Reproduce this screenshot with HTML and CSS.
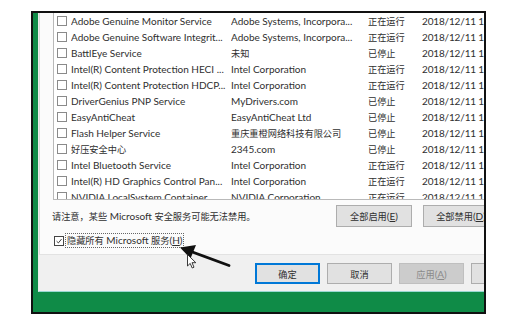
FILE: index.html
```html
<!DOCTYPE html>
<html lang="zh-CN">
<head>
<meta charset="utf-8">
<title>系统配置 - 服务</title>
<link rel="stylesheet" href="styles.css">
</head>
<body>
<div class="frame">
  <div class="window">
    <div class="tabpage">
      <div class="list">
        <div class="row"><span class="cb"></span><span class="c name">Adobe Genuine Monitor Service</span><span class="c">Adobe Systems, Incorpora...</span><span class="c zh">正在运行</span><span class="c date">2018/12/11 13:49</span></div>
        <div class="row"><span class="cb"></span><span class="c name">Adobe Genuine Software Integrit...</span><span class="c">Adobe Systems, Incorpora...</span><span class="c zh">正在运行</span><span class="c date">2018/12/11 13:49</span></div>
        <div class="row"><span class="cb"></span><span class="c name">BattlEye Service</span><span class="c zh">未知</span><span class="c zh">已停止</span><span class="c date">2018/12/11 13:49</span></div>
        <div class="row"><span class="cb"></span><span class="c name">Intel(R) Content Protection HECI ...</span><span class="c">Intel Corporation</span><span class="c zh">正在运行</span><span class="c date">2018/12/11 13:49</span></div>
        <div class="row"><span class="cb"></span><span class="c name">Intel(R) Content Protection HDCP...</span><span class="c">Intel Corporation</span><span class="c zh">正在运行</span><span class="c date">2018/12/11 13:49</span></div>
        <div class="row"><span class="cb"></span><span class="c name">DriverGenius PNP Service</span><span class="c">MyDrivers.com</span><span class="c zh">已停止</span><span class="c date">2018/12/11 13:49</span></div>
        <div class="row"><span class="cb"></span><span class="c name">EasyAntiCheat</span><span class="c">EasyAntiCheat Ltd</span><span class="c zh">已停止</span><span class="c date">2018/12/11 13:49</span></div>
        <div class="row"><span class="cb"></span><span class="c name">Flash Helper Service</span><span class="c zh">重庆重橙网络科技有限公司</span><span class="c zh">已停止</span><span class="c date">2018/12/11 13:49</span></div>
        <div class="row"><span class="cb"></span><span class="c name zh">好压安全中心</span><span class="c">2345.com</span><span class="c zh">已停止</span><span class="c date">2018/12/11 13:49</span></div>
        <div class="row"><span class="cb"></span><span class="c name">Intel Bluetooth Service</span><span class="c">Intel Corporation</span><span class="c zh">正在运行</span><span class="c date">2018/12/11 13:49</span></div>
        <div class="row"><span class="cb"></span><span class="c name">Intel(R) HD Graphics Control Pan...</span><span class="c">Intel Corporation</span><span class="c zh">正在运行</span><span class="c date">2018/12/11 13:49</span></div>
        <div class="row"><span class="cb"></span><span class="c name">NVIDIA LocalSystem Container</span><span class="c">NVIDIA Corporation</span><span class="c zh">正在运行</span><span class="c date">2018/12/11 13:49</span></div>
      </div>
      <div class="noterow">
        <span class="note"><span class="zh">请注意，某些</span> Microsoft <span class="zh">安全服务可能无法禁用。</span></span>
        <span class="btn wide"><span class="zh">全部启用</span>(<u>E</u>)</span>
        <span class="btn wide"><span class="zh">全部禁用</span>(<u>D</u>)</span>
      </div>
      <div class="hiderow">
        <span class="cb checked"><svg viewBox="0 0 10 10" width="10" height="10"><path d="M2 5.2 L4.2 7.4 L8.2 2.6" fill="none" stroke="#222" stroke-width="1.1"/></svg></span>
        <span class="focus"><span class="zh">隐藏所有</span> Microsoft <span class="zh">服务</span>(<u>H</u>)</span>
      </div>
    </div>
    <div class="footer">
      <span class="btn default"><span class="zh">确定</span></span>
      <span class="btn"><span class="zh">取消</span></span>
      <span class="btn disabled"><span class="zh">应用</span>(<u>A</u>)</span>
      <span class="btn"><span class="zh">帮助</span></span>
    </div>
  </div>
</div>
<svg class="overlay" width="517" height="336" viewBox="0 0 517 336">
  <line x1="229" y1="265.5" x2="191" y2="251.5" stroke="#111" stroke-width="2.8" stroke-linecap="round"/>
  <polygon points="180,247.5 196,245 190.5,258.5" fill="#111"/>
  <path d="M187.5 254.5 L187.5 266 L190.2 263.4 L192.2 268 L194 267.2 L192 262.7 L195.8 262.7 Z" fill="#fff" stroke="#222" stroke-width="0.9" stroke-linejoin="round"/>
</svg>
</body>
</html>
```

FILE: styles.css
```css
html, body {
  margin: 0;
  padding: 0;
}
body {
  width: 517px;
  height: 336px;
  overflow: hidden;
  background: #ffffff;
  position: relative;
  font-family: Lato, "Noto Sans CJK SC", sans-serif;
  font-size: 10px;
  color: #2f2f2f;
}
.zh {
  font-family: "Noto Sans CJK SC", sans-serif;
  font-size: 9.2px;
}
.frame {
  margin: 11px 0 0 31px;
  width: 455px;
  height: 303px;
  box-sizing: border-box;
  border: 2px solid #111;
  background: #0f8b47;
  overflow: hidden;
  padding-left: 5px;
}
.window {
  width: 560px;
  height: 279px;
  box-sizing: border-box;
  border-left: 1px solid #e8ecea;
  border-bottom: 1px solid #9ad8d2;
  background: #f0f0f0;
  display: flex;
  flex-direction: column;
}
.tabpage {
  height: 242px;
  box-sizing: border-box;
  background: #fbfbfb;
  border-left: 1px solid #dcdcdc;
  border-bottom: 1px solid #e2e2e2;
  padding-left: 13px;
}
.list {
  width: 520px;
  height: 187px;
  box-sizing: border-box;
  background: #ffffff;
  border-left: 1px solid #b9b9b9;
  border-bottom: 1px solid #b9b9b9;
  overflow: hidden;
}
.row {
  display: grid;
  grid-template-columns: 17px 160px 137px 54px 120px;
  align-items: center;
  height: 16px;
  white-space: nowrap;
}
.c {
  overflow: hidden;
  white-space: nowrap;
}
.date {
  letter-spacing: -0.15px;
}
.cb {
  display: block;
  width: 10px;
  height: 10px;
  box-sizing: border-box;
  border: 1px solid #8a8a8a;
  background: #fff;
  margin-left: 3px;
}
.noterow {
  display: flex;
  align-items: center;
  height: 22px;
  margin-top: 5px;
}
.note {
  width: 284px;
  margin-left: -1px;
  white-space: nowrap;
}
.btn {
  display: flex;
  align-items: center;
  justify-content: center;
  box-sizing: border-box;
  height: 21px;
  width: 65px;
  flex: none;
  background: #e1e1e1;
  border: 1px solid #adadad;
  color: #2f2f2f;
  white-space: nowrap;
}
.btn.wide {
  width: 76px;
  height: 22px;
  margin-right: 11px;
}
.hiderow {
  display: flex;
  align-items: center;
  height: 15px;
  margin-top: 6px;
  padding-left: 1px;
}
.hiderow .cb {
  margin-left: 0;
  display: flex;
  align-items: center;
  justify-content: center;
  border-color: #444;
}
.focus {
  margin-left: 1px;
  padding: 0 1px;
  height: 15px;
  line-height: 13px;
  box-sizing: border-box;
  border: 1px dotted #666;
  white-space: nowrap;
}
.footer {
  flex: 1;
  display: flex;
  align-items: flex-start;
  gap: 7px;
  padding-top: 8px;
  padding-left: 216px;
  background: #f0f0f0;
}
.btn.default {
  border: 2px solid #0078d7;
}
.btn.disabled {
  background: #cccccc;
  border-color: #bfbfbf;
  color: #8a8a8a;
}
.overlay {
  position: absolute;
  left: 0;
  top: 0;
  pointer-events: none;
}
```
